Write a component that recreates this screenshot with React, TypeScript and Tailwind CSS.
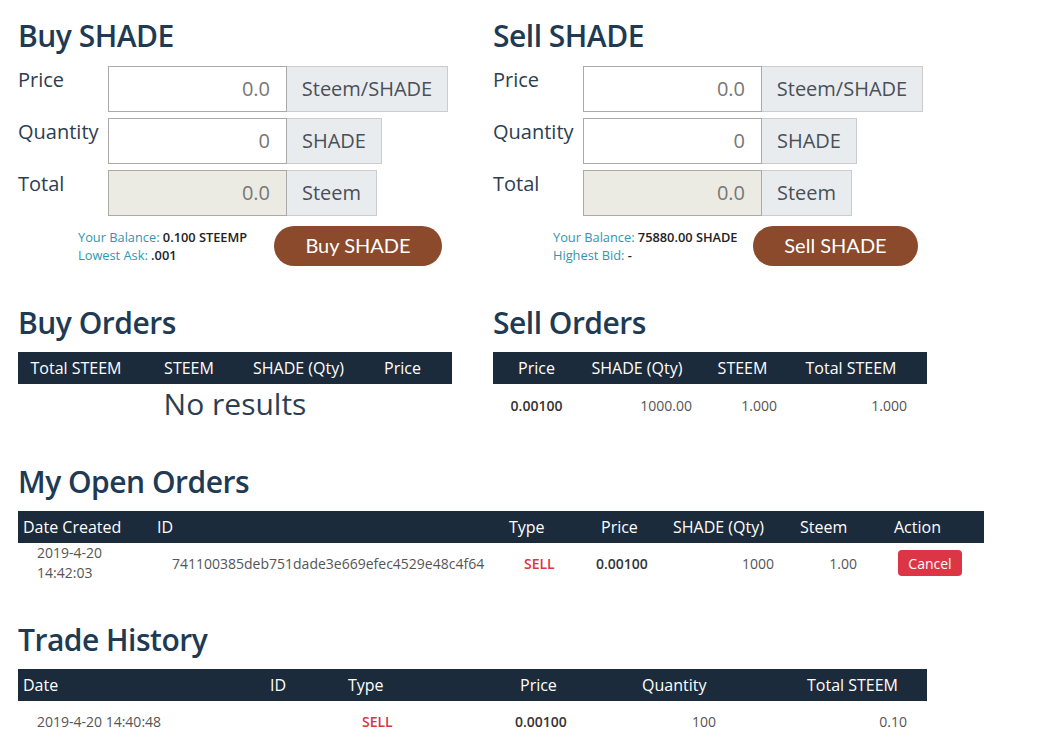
import React from 'react';

interface FieldProps {
  label: string;
  value: string;
  unit: string;
  unitWidth: string;
  disabled?: boolean;
}

const Field: React.FC<FieldProps> = ({ label, value, unit, unitWidth, disabled }) => (
  <div className="flex h-[46px]">
    <div className="w-[90px] text-[20px] leading-[28px] text-[#2c3e50]">{label}</div>
    <div
      className={`h-[46px] w-[179px] border border-[#aaaaaa] pr-[16px] text-right text-[20px] leading-[44px] text-[#777777] ${
        disabled ? 'bg-[#ebebe4]' : 'bg-white'
      }`}
    >
      {value}
    </div>
    <div
      className={`h-[46px] ${unitWidth} border border-l-0 border-[#cccccc] bg-[#e9ecef] text-center text-[20px] leading-[44px] text-[#495057]`}
    >
      {unit}
    </div>
  </div>
);

interface TradeFormProps {
  title: string;
  balance: string;
  marketLabel: string;
  marketValue: string;
  button: string;
  balanceWidth: string;
  buttonWidth: string;
}

const TradeForm: React.FC<TradeFormProps> = ({ title, balance, marketLabel, marketValue, button, balanceWidth, buttonWidth }) => (
  <div className="w-[475px]">
    <h2 className="text-[30px] font-semibold leading-[36px] tracking-[-0.5px] text-[#213a53]">{title}</h2>
    <div className="mt-[12px] flex flex-col gap-[6px]">
      <Field label="Price" value="0.0" unit="Steem/SHADE" unitWidth="w-[161px]" />
      <Field label="Quantity" value="0" unit="SHADE" unitWidth="w-[95px]" />
      <Field label="Total" value="0.0" unit="Steem" unitWidth="w-[90px]" disabled />
    </div>
    <div className="mt-[10px] flex items-center pl-[60px]">
      <div className={`${balanceWidth} text-[12.8px] leading-[18px]`}>
        <div>
          <span className="text-[#3196b0]">Your Balance: </span>
          <span className="font-semibold text-[#222222]">{balance}</span>
        </div>
        <div>
          <span className="text-[#3196b0]">{marketLabel}: </span>
          <span className="font-semibold text-[#222222]">{marketValue}</span>
        </div>
      </div>
      <button
        className={`h-[40px] ${buttonWidth} rounded-[20px] bg-[#8b4a2b] pb-[3px] text-center font-['Lato',sans-serif] text-[20px] text-white`}
      >
        {button}
      </button>
    </div>
  </div>
);

const Heading: React.FC<{ children: React.ReactNode }> = ({ children }) => (
  <h2 className="mb-[11px] text-[30px] font-semibold leading-[36px] tracking-[-0.5px] text-[#213a53]">{children}</h2>
);

const App: React.FC = () => {
  return (
    <div className="min-h-screen bg-white pl-[18px] pt-[18px] font-['Open_Sans',sans-serif] text-[#2c3e50]">
      <div className="flex">
        <TradeForm
          title="Buy SHADE"
          balance="0.100 STEEMP"
          marketLabel="Lowest Ask"
          marketValue=".001"
          button="Buy SHADE"
          balanceWidth="w-[196px]"
          buttonWidth="w-[168px]"
        />
        <TradeForm
          title="Sell SHADE"
          balance="75880.00 SHADE"
          marketLabel="Highest Bid"
          marketValue="-"
          button="Sell SHADE"
          balanceWidth="w-[200px]"
          buttonWidth="w-[165px]"
        />
      </div>

      <div className="mt-[39px] flex">
        <div className="w-[475px]">
          <Heading>Buy Orders</Heading>
          <div className="grid h-[32px] w-[434px] grid-cols-[116px_110px_109px_99px] items-center bg-[#1c2b3b] text-center text-[16px] text-white">
            <div>Total STEEM</div>
            <div>STEEM</div>
            <div>SHADE (Qty)</div>
            <div>Price</div>
          </div>
          <div className="w-[434px] text-center text-[30px] leading-[40px] text-[#2c3e50]">No results</div>
        </div>
        <div className="w-[475px]">
          <Heading>Sell Orders</Heading>
          <div className="grid h-[32px] w-[434px] grid-cols-[87px_120px_85px_142px] items-center bg-[#1c2b3b] text-center text-[16px] text-white">
            <div>Price</div>
            <div className="pr-[6px]">SHADE (Qty)</div>
            <div>STEEM</div>
            <div className="pr-[10px]">Total STEEM</div>
          </div>
          <div className="grid h-[42px] w-[434px] grid-cols-[87px_120px_85px_142px] items-center text-[14px] text-[#555555]">
            <div className="text-center font-semibold text-[#333333]">0.00100</div>
            <div className="pr-[8px] text-right">1000.00</div>
            <div className="pr-[8px] text-right">1.000</div>
            <div className="pr-[20px] text-right">1.000</div>
          </div>
        </div>
      </div>

      <div className="mt-[38px]">
        <Heading>My Open Orders</Heading>
        <div className="grid h-[32px] w-[966px] grid-cols-[134px_348px_80px_80px_125px_85px_114px] items-center bg-[#1c2b3b] text-[16px] text-white">
          <div className="pl-[5px]">Date Created</div>
          <div className="pl-[5px]">ID</div>
          <div className="pl-[9px]">Type</div>
          <div className="pl-[21px]">Price</div>
          <div className="pl-[13px]">SHADE (Qty)</div>
          <div className="pl-[15px]">Steem</div>
          <div className="pl-[24px]">Action</div>
        </div>
        <div className="grid h-[40px] w-[966px] grid-cols-[134px_348px_80px_80px_125px_85px_114px] items-center text-[14px] text-[#555555]">
          <div className="pl-[19px] leading-[20px]">
            2019-4-20
            <br />
            14:42:03
          </div>
          <div className="pl-[20px]">741100385deb751dade3e669efec4529e48c4f64</div>
          <div className="pl-[24px] font-semibold text-[#d9363e]">SELL</div>
          <div className="pl-[16px] font-semibold text-[#333333]">0.00100</div>
          <div className="pr-[11px] text-right">1000</div>
          <div className="pr-[13px] text-right">1.00</div>
          <div className="pl-[28px]">
            <button className="h-[26px] w-[64px] rounded-[4px] bg-[#dc3545] text-[14px] text-white">Cancel</button>
          </div>
        </div>
      </div>

      <div className="mt-[39px]">
        <Heading>Trade History</Heading>
        <div className="grid h-[32px] w-[909px] grid-cols-[242px_80px_160px_120px_140px_167px] items-center bg-[#1c2b3b] text-[16px] text-white">
          <div className="pl-[5px]">Date</div>
          <div className="pl-[10px]">ID</div>
          <div className="pl-[8px]">Type</div>
          <div className="pl-[20px]">Price</div>
          <div className="pl-[22px]">Quantity</div>
          <div className="pl-[47px]">Total STEEM</div>
        </div>
        <div className="grid h-[40px] w-[909px] grid-cols-[242px_80px_160px_120px_140px_167px] items-center text-[14px] text-[#555555]">
          <div className="pl-[19px]">2019-4-20 14:40:48</div>
          <div></div>
          <div className="pl-[22px] font-semibold text-[#d9363e]">SELL</div>
          <div className="pl-[15px] font-semibold text-[#333333]">0.00100</div>
          <div className="pr-[44px] text-right">100</div>
          <div className="pr-[20px] text-right">0.10</div>
        </div>
      </div>
    </div>
  );
};

export default App;
